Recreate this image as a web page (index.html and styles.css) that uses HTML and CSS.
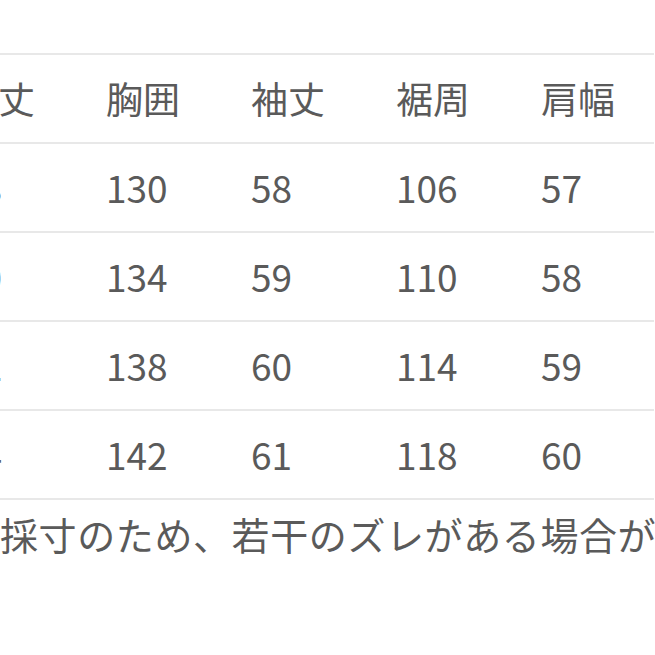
FILE: index.html
```html
<!DOCTYPE html>
<html lang="ja">
<head>
<meta charset="utf-8">
<link rel="stylesheet" href="styles.css">
</head>
<body>
<div class="page">
  <div class="sheet">
    <div class="row head">
      <div class="cell">着丈</div>
      <div class="cell">胸囲</div>
      <div class="cell">袖丈</div>
      <div class="cell">裾周</div>
      <div class="cell">肩幅</div>
    </div>
    <div class="row">
      <div class="cell">68</div>
      <div class="cell">130</div>
      <div class="cell">58</div>
      <div class="cell">106</div>
      <div class="cell">57</div>
    </div>
    <div class="row">
      <div class="cell">70</div>
      <div class="cell">134</div>
      <div class="cell">59</div>
      <div class="cell">110</div>
      <div class="cell">58</div>
    </div>
    <div class="row">
      <div class="cell">72</div>
      <div class="cell">138</div>
      <div class="cell">60</div>
      <div class="cell">114</div>
      <div class="cell">59</div>
    </div>
    <div class="row">
      <div class="cell">74</div>
      <div class="cell">142</div>
      <div class="cell">61</div>
      <div class="cell">118</div>
      <div class="cell">60</div>
    </div>
  </div>
  <p class="note">採寸のため、若干のズレがある場合があります。</p>
</div>
</body>
</html>
```

FILE: styles.css
```css
html, body {
  margin: 0;
  padding: 0;
  background: #ffffff;
}
body {
  width: 655px;
  height: 655px;
  overflow: hidden;
  font-family: "Noto Sans CJK JP", "Noto Sans", sans-serif;
  color: #5a5a5a;
}
.page {
  padding-top: 53px;
}
.sheet {
  margin-left: -39px;
  width: 693px;
  border-top: 2px solid #e8e8e8;
}
.row {
  display: grid;
  grid-template-columns: repeat(5, 145px);
  align-items: center;
  height: 87px;
  border-bottom: 2px solid #e8e8e8;
}
.cell {
  font-size: 37px;
  line-height: 1;
  white-space: nowrap;
}
.note {
  margin: 0;
  padding-top: 6px;
  font-size: 38px;
  line-height: 56px;
  white-space: nowrap;
  letter-spacing: 0.6px;
}
```
